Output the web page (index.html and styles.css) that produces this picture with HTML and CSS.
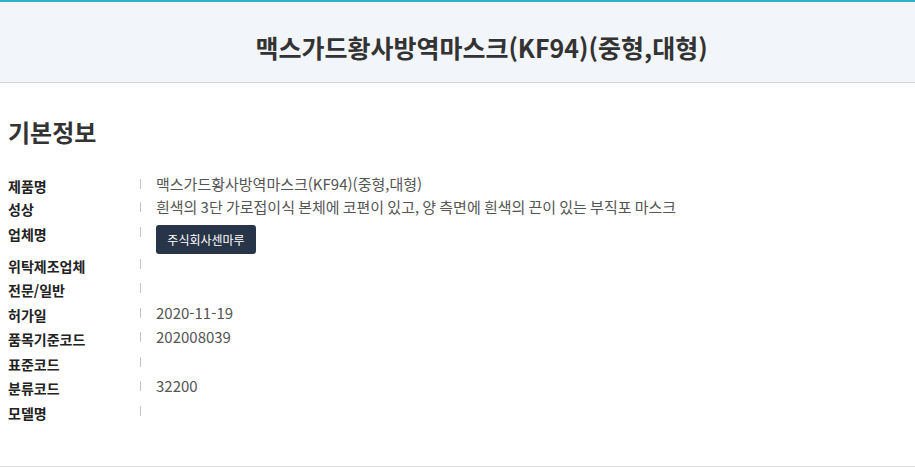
FILE: index.html
```html
<!DOCTYPE html>
<html lang="ko">
<head>
<meta charset="utf-8">
<link rel="stylesheet" href="styles.css">
</head>
<body>
<header class="top">
  <h1 class="title">맥스가드황사방역마스크(KF94)(중형,대형)</h1>
</header>
<main class="content">
  <h2 class="section-title">기본정보</h2>
  <dl class="info">
    <div class="row"><dt>제품명</dt><span class="sep"></span><dd>맥스가드황사방역마스크(KF94)(중형,대형)</dd></div>
    <div class="row"><dt>성상</dt><span class="sep"></span><dd>흰색의 3단 가로접이식 본체에 코편이 있고, 양 측면에 흰색의 끈이 있는 부직포 마스크</dd></div>
    <div class="row row-btn"><dt>업체명</dt><span class="sep"></span><dd><a class="btn">주식회사센마루</a></dd></div>
    <div class="row"><dt>위탁제조업체</dt><span class="sep"></span><dd></dd></div>
    <div class="row"><dt>전문/일반</dt><span class="sep"></span><dd></dd></div>
    <div class="row"><dt>허가일</dt><span class="sep"></span><dd>2020-11-19</dd></div>
    <div class="row"><dt>품목기준코드</dt><span class="sep"></span><dd>202008039</dd></div>
    <div class="row"><dt>표준코드</dt><span class="sep"></span><dd></dd></div>
    <div class="row"><dt>분류코드</dt><span class="sep"></span><dd>32200</dd></div>
    <div class="row"><dt>모델명</dt><span class="sep"></span><dd></dd></div>
  </dl>
</main>
</body>
</html>
```
FILE: styles.css
```css
* { box-sizing: border-box; }
html, body {
  margin: 0;
  padding: 0;
  background: #fff;
  font-family: "Noto Sans CJK KR", "Noto Sans", sans-serif;
  color: #333;
}
.top {
  border-top: 2px solid #2fb2c7;
  border-bottom: 1px solid #d2d5d9;
  background: #f2f5f9;
  height: 83px;
  padding-top: 27px;
  padding-left: 48px;
}
.title {
  margin: 0;
  text-align: center;
  font-size: 25px;
  line-height: 36px;
  font-weight: 700;
  color: #333;
}
.content {
  padding: 0 8px;
  border-bottom: 1px solid #dcdcdc;
  height: 384px;
}
.section-title {
  margin: 0;
  padding-top: 32px;
  font-size: 24px;
  line-height: 34px;
  font-weight: 700;
  color: #333;
}
.info {
  margin: 25px 0 0;
}
.row {
  display: flex;
  align-items: flex-start;
  height: 24.5px;
}
.row:first-child { height: 23px; }
.row-btn { height: 32px; }
dt {
  width: 132px;
  flex: none;
  font-size: 14px;
  line-height: 20px;
  font-weight: 700;
  color: #222;
  padding-top: 2px;
}
.sep {
  flex: none;
  width: 1px;
  height: 10px;
  margin-top: 5px;
  margin-right: 15px;
  background: #c4c4c4;
}
dd {
  margin: 0;
  font-size: 15px;
  line-height: 20px;
  color: #555;
  word-spacing: -1px;
}
.btn {
  display: inline-block;
  margin-top: 3px;
  height: 29px;
  line-height: 29px;
  padding: 0 8px;
  width: 100px;
  text-align: center;
  background: #283548;
  color: #fff;
  font-size: 12px;
  border-radius: 3px;
  word-spacing: 0;
}
```
